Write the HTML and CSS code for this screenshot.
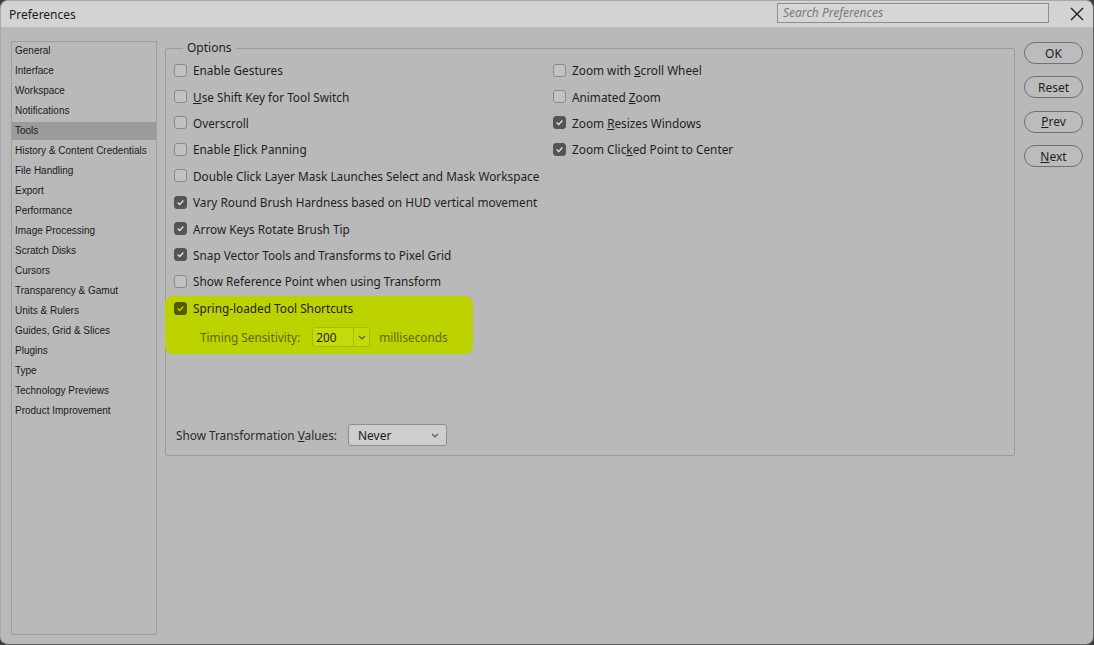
FILE: index.html
```html
<!DOCTYPE html>
<html lang="en">
<head>
    <meta charset="UTF-8">
    <title>Preferences</title>
    <link rel="stylesheet" href="styles.css">
</head>
<body>
    <div class="window">
        <header class="titlebar">
            <span class="title">Preferences</span>
            <input class="search" type="text" placeholder="Search Preferences">
            <svg class="close" width="14" height="14" viewBox="0 0 14 14">
                <path d="M1 1L13 13M13 1L1 13" stroke="#1e1e1e" stroke-width="1.4" fill="none"/>
            </svg>
        </header>

        <div class="main">
            <ul class="nav">
                <li>General</li>
                <li>Interface</li>
                <li>Workspace</li>
                <li>Notifications</li>
                <li class="active">Tools</li>
                <li>History &amp; Content Credentials</li>
                <li>File Handling</li>
                <li>Export</li>
                <li>Performance</li>
                <li>Image Processing</li>
                <li>Scratch Disks</li>
                <li>Cursors</li>
                <li>Transparency &amp; Gamut</li>
                <li>Units &amp; Rulers</li>
                <li>Guides, Grid &amp; Slices</li>
                <li>Plugins</li>
                <li>Type</li>
                <li>Technology Previews</li>
                <li>Product Improvement</li>
            </ul>

            <fieldset class="options">
                <legend>Options</legend>
                <div class="cols">
                    <div class="col">
                        <div class="row"><span class="cb"></span>Enable Gestures</div>
                        <div class="row"><span class="cb"></span><span><u>U</u>se Shift Key for Tool Switch</span></div>
                        <div class="row"><span class="cb"></span>Overscroll</div>
                        <div class="row"><span class="cb"></span><span>Enable <u>F</u>lick Panning</span></div>
                        <div class="row"><span class="cb"></span>Double Click Layer Mask Launches Select and Mask Workspace</div>
                        <div class="row"><span class="cb on"><svg viewBox="0 0 13 13"><path d="M3.2 6.6L5.6 9L9.8 4.2"/></svg></span>Vary Round Brush Hardness based on HUD vertical movement</div>
                        <div class="row"><span class="cb on"><svg viewBox="0 0 13 13"><path d="M3.2 6.6L5.6 9L9.8 4.2"/></svg></span>Arrow Keys Rotate Brush Tip</div>
                        <div class="row"><span class="cb on"><svg viewBox="0 0 13 13"><path d="M3.2 6.6L5.6 9L9.8 4.2"/></svg></span>Snap Vector Tools and Transforms to Pixel Grid</div>
                        <div class="row"><span class="cb"></span>Show Reference Point when using Transform</div>
                        <div class="highlight">
                            <div class="row spring"><span class="cb on"><svg viewBox="0 0 13 13"><path d="M3.2 6.6L5.6 9L9.8 4.2"/></svg></span>Spring-loaded Tool Shortcuts</div>
                            <div class="timing">
                                <span>Timing Sensitivity:</span>
                                <div class="combo">
                                    <span class="combo-value">200</span>
                                    <span class="combo-arrow">
                                        <svg width="8" height="5" viewBox="0 0 8 5"><path d="M1 1L4 4L7 1"/></svg>
                                    </span>
                                </div>
                                <span>milliseconds</span>
                            </div>
                        </div>
                    </div>
                    <div class="col">
                        <div class="row"><span class="cb"></span><span>Zoom with <u>S</u>croll Wheel</span></div>
                        <div class="row"><span class="cb"></span><span>Animated <u>Z</u>oom</span></div>
                        <div class="row"><span class="cb on"><svg viewBox="0 0 13 13"><path d="M3.2 6.6L5.6 9L9.8 4.2"/></svg></span><span>Zoom <u>R</u>esizes Windows</span></div>
                        <div class="row"><span class="cb on"><svg viewBox="0 0 13 13"><path d="M3.2 6.6L5.6 9L9.8 4.2"/></svg></span><span>Zoom Clic<u>k</u>ed Point to Center</span></div>
                    </div>
                </div>
                <div class="transform">
                    <span>Show Transformation <u>V</u>alues:</span>
                    <div class="select">
                        <span>Never</span>
                        <svg width="8" height="5" viewBox="0 0 8 5"><path d="M1 1L4 4L7 1"/></svg>
                    </div>
                </div>
            </fieldset>

            <div class="buttons">
                <button class="btn">OK</button>
                <button class="btn">Reset</button>
                <button class="btn"><u>P</u>rev</button>
                <button class="btn"><u>N</u>ext</button>
            </div>
        </div>
    </div>
</body>
</html>
```

FILE: styles.css
```css
html, body {
    margin: 0;
    padding: 0;
    background: #3c3c3c;
}
body {
    font-family: "Noto Sans", "Open Sans", sans-serif;
    color: #1e1e1e;
}
.window {
    width: 1094px;
    height: 645px;
    box-sizing: border-box;
    background: #b9b9b9;
    border: 1px solid #606060;
    border-left-color: #a8a8a8;
    border-top-color: #a8a8a8;
    border-radius: 8px;
    overflow: hidden;
}

/* title bar */
.titlebar {
    height: 26px;
    background: #d3d3d3;
    display: flex;
    align-items: center;
    padding-left: 8px;
}
.title {
    font-size: 12px;
    flex: 1;
    color: #1a1a1a;
}
.search {
    width: 272px;
    height: 20px;
    box-sizing: border-box;
    margin-top: -3px;
    border: 1px solid #8e8e8e;
    background: #d6d6d6;
    padding: 0 5px;
    font-family: "Noto Sans", sans-serif;
    font-size: 12px;
    font-style: italic;
    outline: none;
}
.search::placeholder {
    color: #7a7a7a;
}
.close {
    margin: 0 9px 0 21px;
}

/* body */
.main {
    display: flex;
    padding: 13px 10px 0 10px;
}
.nav {
    list-style: none;
    margin: 1px 8px 0 0;
    padding: 0;
    width: 146px;
    height: 594px;
    box-sizing: border-box;
    border: 1px solid #9e9e9e;
    font-family: "Liberation Sans", Arial, sans-serif;
    font-size: 10px;
    color: #1a1a1a;
}
.nav li {
    height: 18px;
    line-height: 18px;
    margin-bottom: 2px;
    padding-left: 3px;
}
.nav li.active {
    background: #9b9b9b;
}

.options {
    width: 850px;
    height: 416px;
    box-sizing: border-box;
    margin: 0;
    padding: 1px 0 9px 8px;
    border: 1px solid #9c9c9c;
    border-radius: 2px;
    display: flex;
    flex-direction: column;
    font-size: 11.8px;
}
.options legend {
    margin-left: 9px;
    padding: 0 4px;
    font-size: 12px;
    line-height: 16px;
}
.cols {
    display: grid;
    grid-template-columns: 379px 1fr;
}
.row {
    height: 26.4px;
    display: flex;
    align-items: center;
    gap: 6px;
    white-space: nowrap;
}
.cb {
    width: 13px;
    height: 13px;
    box-sizing: border-box;
    border: 1px solid #8a8a8a;
    border-radius: 3px;
    background: #c2c2c2;
    flex: none;
    display: flex;
}
.cb svg {
    width: 11px;
    height: 11px;
}
.cb svg path {
    fill: none;
    stroke: #e8e8e8;
    stroke-width: 1.6;
}
.cb.on {
    background: #555555;
    border-color: #555555;
}

.highlight {
    margin: 1.6px 0 0 -9px;
    padding-left: 9px;
    width: 308px;
    box-sizing: border-box;
    background: #bcd300;
    border-radius: 8px;
}
.highlight .spring {
    height: 24px;
}
.highlight .cb.on {
    background: #505a00;
    border-color: #505a00;
}
.highlight .cb svg path {
    stroke: #c3da10;
}
.timing {
    height: 34px;
    display: flex;
    align-items: center;
    padding-left: 26px;
    color: #5b6714;
}
.combo {
    display: flex;
    align-items: stretch;
    height: 20px;
    width: 58px;
    box-sizing: border-box;
    margin: 0 9px 0 12px;
    border: 1px solid #a7bd00;
    border-radius: 3px;
    background: #c4da0c;
    color: #222;
}
.combo-value {
    flex: 1;
    padding-left: 3px;
    line-height: 18px;
}
.combo-arrow {
    width: 15px;
    border-left: 1px solid #a7bd00;
    display: flex;
    align-items: center;
    justify-content: center;
}
.combo-arrow path, .select path {
    fill: none;
    stroke: #555;
    stroke-width: 1.1;
}

.transform {
    margin-top: auto;
    display: flex;
    align-items: center;
    padding-left: 2px;
    color: #2a2a2a;
}
.select {
    width: 99px;
    height: 22px;
    box-sizing: border-box;
    margin-left: 11px;
    border: 1px solid #8e8e8e;
    border-radius: 3px;
    background: #cecece;
    display: flex;
    align-items: center;
    justify-content: space-between;
    padding: 0 7px 0 9px;
    color: #1a1a1a;
    font-size: 12px;
}

.buttons {
    margin-left: 9px;
    padding-top: 2px;
    display: flex;
    flex-direction: column;
    gap: 12.4px;
}
.btn {
    width: 59px;
    height: 22px;
    border: 1px solid #707070;
    border-radius: 11px;
    background: #bcbcbc;
    font-family: "Noto Sans", sans-serif;
    font-size: 12px;
    color: #1e1e1e;
    padding: 0;
}
```
